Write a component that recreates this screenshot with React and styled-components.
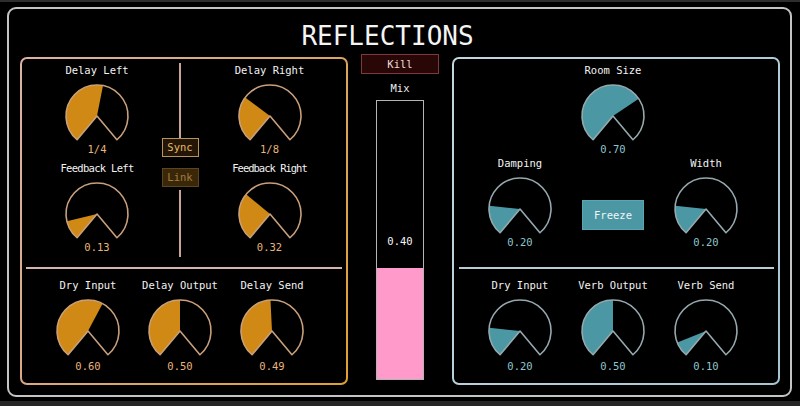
import React from "react";
import styled, { createGlobalStyle } from "styled-components";

const GlobalStyle = createGlobalStyle`
  html, body { margin: 0; padding: 0; background: #000; }
  * { box-sizing: border-box; }
`;

const MONO = `"DejaVu Sans Mono", "Liberation Mono", monospace`;

const TONES = {
  orange: { fill: "#cf8914", stroke: "#c9a07c", value: "#e8b47c" },
  teal: { fill: "#4b97a3", stroke: "#95a9ae", value: "#8fc5cf" },
};

const Page = styled.div`
  width: 800px;
  height: 406px;
  background: #000;
  border-top: 2px solid #2e2e2e;
  border-bottom: 5px solid #262626;
  padding-top: 5px;
  font-family: ${MONO};
  overflow: hidden;
`;

const Frame = styled.div`
  margin-left: 7px;
  width: 785px;
  height: 390px;
  border: 2px solid #c4c4c4;
  border-radius: 9px;
  display: flex;
  flex-direction: column;
  padding: 0 10px 10px 11px;
`;

const Title = styled.h1`
  margin: 0;
  height: 45px;
  padding: 12px 25px 0 0;
  font-family: ${MONO};
  font-weight: normal;
  font-size: 26px;
  line-height: 30px;
  color: #f4f4f4;
  text-align: center;
`;

const Body = styled.div`
  flex: 1;
  display: flex;
`;

const Panel = styled.section`
  width: 328px;
  height: 328px;
  margin-top: 3px;
  border: 2px solid transparent;
  border-radius: 7px;
  background: linear-gradient(#000, #000) padding-box,
    ${(p) =>
      p.$tone === "orange"
        ? "linear-gradient(120deg, #dcb2a8 0%, #d8a878 45%, #e0a030 100%)"
        : "linear-gradient(120deg, #c4d6de 0%, #b0ccd8 60%, #a4c4d2 100%)"}
      border-box;
  display: flex;
  flex-direction: column;
`;

const TopSection = styled.div`
  height: 208px;
  padding-top: 4px;
`;

const BottomSection = styled.div`
  flex: 1;
  padding-top: 9px;
`;

const HDivider = styled.div`
  height: 2px;
  margin: 0 4px 0 ${(p) => (p.$tone === "orange" ? "4px" : "5px")};
  background: ${(p) => (p.$tone === "orange" ? "#d4b4ac" : "#b8ccd4")};
`;

const DelayGrid = styled.div`
  display: grid;
  grid-template-columns: 139px 38px 1fr;
  height: 100%;
`;

const KnobStack = styled.div`
  display: flex;
  flex-direction: column;
  align-items: center;
  gap: 5px;
  padding-left: ${(p) => p.$padLeft || 0}px;
  padding-right: ${(p) => p.$padRight || 0}px;
`;

const LinkColumn = styled.div`
  display: flex;
  flex-direction: column;
  align-items: center;
  padding-bottom: 10px;
`;

const VLine = styled.div`
  width: 2px;
  background: #c8a496;
  height: ${(p) => (p.$h ? `${p.$h}px` : "auto")};
  flex: ${(p) => (p.$h ? "none" : 1)};
`;

const ToggleButton = styled.button`
  width: 37px;
  height: 19px;
  padding: 0;
  margin-top: ${(p) => p.$mt || 0}px;
  margin-bottom: ${(p) => p.$mb || 0}px;
  font-family: ${MONO};
  font-size: 10.5px;
  line-height: 15px;
  border: 1.5px solid ${(p) => (p.$on ? "#b8935a" : "#5c4520")};
  background: ${(p) => (p.$on ? "#231606" : "#3a2708")};
  color: ${(p) => (p.$on ? "#e8b868" : "#a37a42")};
`;

const KnobRow = styled.div`
  display: flex;
  padding-left: ${(p) => p.$padLeft || 0}px;
  padding-right: ${(p) => p.$padRight || 0}px;
  justify-content: ${(p) => p.$justify || "flex-start"};
`;

const Slot = styled.div`
  width: ${(p) => p.$w || 92}px;
  display: flex;
  justify-content: center;
  align-items: flex-start;
`;

const KnobWrap = styled.div`
  display: flex;
  flex-direction: column;
  align-items: center;
  width: 92px;
`;

const KnobLabel = styled.div`
  height: 14px;
  line-height: 14px;
  font-size: 10.5px;
  color: #f2f2f2;
  white-space: nowrap;
  letter-spacing: ${(p) => p.$squeeze || 0}px;
  margin-bottom: 6px;
`;

const KnobDial = styled.svg`
  display: block;
  width: 66px;
  height: 59px;
  overflow: visible;
`;

const KnobValue = styled.div`
  height: 14px;
  margin-top: ${(p) => p.$drop || 0}px;
  line-height: 14px;
  font-size: 10.5px;
  color: ${(p) => TONES[p.$tone].value};
`;

const MixColumn = styled.div`
  width: 104px;
  display: flex;
  flex-direction: column;
  align-items: center;
`;

const KillButton = styled.button`
  width: 78px;
  height: 20px;
  padding: 0;
  font-family: ${MONO};
  font-size: 10.5px;
  line-height: 16px;
  color: #eadada;
  background: #2a0707;
  border: 1.5px solid #7c3a3a;
`;

const MixLabel = styled.div`
  margin-top: 7px;
  height: 14px;
  line-height: 14px;
  font-size: 10.5px;
  color: #eeeeee;
`;

const MeterTrack = styled.div`
  margin-top: 5px;
  width: 48px;
  height: 280px;
  border: 1.5px solid #b4b4b4;
  display: flex;
  flex-direction: column;
  justify-content: flex-end;
  align-items: stretch;
`;

const MeterReadout = styled.div`
  height: 14px;
  line-height: 14px;
  font-size: 10.5px;
  color: #f6f6f6;
  text-align: center;
  margin-bottom: 20px;
`;

const MeterFill = styled.div`
  background: #ff9acb;
`;

const CenterRow = styled.div`
  display: flex;
  justify-content: center;
  padding-right: 6px;
`;

const FreezeButton = styled.button`
  margin-top: 44px;
  width: 62px;
  height: 30px;
  padding: 0;
  font-family: ${MONO};
  font-size: 10.5px;
  color: #f2f6f6;
  background: #4b97a3;
  border: 1px solid #5aa6b2;
`;

const CX = 33;
const CY = 33;
const R = 31;

function pt(deg) {
  const a = (deg * Math.PI) / 180;
  return `${(CX + R * Math.sin(a)).toFixed(2)} ${(CY - R * Math.cos(a)).toFixed(2)}`;
}

function Knob({ label, value, fraction, tone, squeeze, drop }) {
  const t = TONES[tone];
  const sweep = 280 * fraction;
  const theta = -140 + sweep;
  const large = sweep > 180 ? 1 : 0;
  const outline = `M${CX} ${CY} L${pt(-140)} A${R} ${R} 0 1 1 ${pt(140)} Z`;
  const fill = `M${CX} ${CY} L${pt(-140)} A${R} ${R} 0 ${large} 1 ${pt(theta)} Z`;
  return (
    <KnobWrap>
      <KnobLabel $squeeze={squeeze}>{label}</KnobLabel>
      <KnobDial viewBox="0 0 66 59">
        <path d={fill} fill={t.fill} />
        <path d={outline} fill="none" stroke={t.stroke} strokeWidth="1.6" strokeLinejoin="round" />
      </KnobDial>
      <KnobValue $tone={tone} $drop={drop}>{value}</KnobValue>
    </KnobWrap>
  );
}

export default function App() {
  const mix = 0.4;
  return (
    <Page>
      <GlobalStyle />
      <Frame>
        <Title>REFLECTIONS</Title>
        <Body>
          <Panel $tone="orange">
            <TopSection>
              <DelayGrid>
                <KnobStack $padLeft={11}>
                  <Knob label="Delay Left" value="1/4" fraction={0.54} tone="orange" />
                  <Knob label="Feedback Left" value="0.13" fraction={0.13} tone="orange" squeeze={-0.7} />
                </KnobStack>
                <LinkColumn>
                  <VLine $h={75} />
                  <ToggleButton $on>Sync</ToggleButton>
                  <ToggleButton $mt={11} $mb={3}>Link</ToggleButton>
                  <VLine />
                </LinkColumn>
                <KnobStack $padRight={6}>
                  <Knob label="Delay Right" value="1/8" fraction={0.31} tone="orange" />
                  <Knob label="Feedback Right" value="0.32" fraction={0.32} tone="orange" squeeze={-1} />
                </KnobStack>
              </DelayGrid>
            </TopSection>
            <HDivider $tone="orange" />
            <BottomSection>
              <KnobRow $padLeft={20}>
                <Knob label="Dry Input" value="0.60" fraction={0.6} tone="orange" drop={2} />
                <Knob label="Delay Output" value="0.50" fraction={0.5} tone="orange" drop={2} />
                <Knob label="Delay Send" value="0.49" fraction={0.49} tone="orange" drop={2} />
              </KnobRow>
            </BottomSection>
          </Panel>

          <MixColumn>
            <KillButton>Kill</KillButton>
            <MixLabel>Mix</MixLabel>
            <MeterTrack>
              <MeterReadout>0.40</MeterReadout>
              <MeterFill style={{ height: `${mix * 100}%` }} />
            </MeterTrack>
          </MixColumn>

          <Panel $tone="teal">
            <TopSection>
              <CenterRow>
                <Knob label="Room Size" value="0.70" fraction={0.7} tone="teal" />
              </CenterRow>
              <KnobRow $justify="center" $padRight={6}>
                <Slot $w={93}>
                  <Knob label="Damping" value="0.20" fraction={0.2} tone="teal" />
                </Slot>
                <Slot $w={93}>
                  <FreezeButton>Freeze</FreezeButton>
                </Slot>
                <Slot $w={93}>
                  <Knob label="Width" value="0.20" fraction={0.2} tone="teal" />
                </Slot>
              </KnobRow>
            </TopSection>
            <HDivider $tone="teal" />
            <BottomSection>
              <KnobRow $justify="center" $padRight={6}>
                <Slot $w={93}>
                  <Knob label="Dry Input" value="0.20" fraction={0.2} tone="teal" drop={2} />
                </Slot>
                <Slot $w={93}>
                  <Knob label="Verb Output" value="0.50" fraction={0.5} tone="teal" drop={2} />
                </Slot>
                <Slot $w={93}>
                  <Knob label="Verb Send" value="0.10" fraction={0.1} tone="teal" drop={2} />
                </Slot>
              </KnobRow>
            </BottomSection>
          </Panel>
        </Body>
      </Frame>
    </Page>
  );
}
